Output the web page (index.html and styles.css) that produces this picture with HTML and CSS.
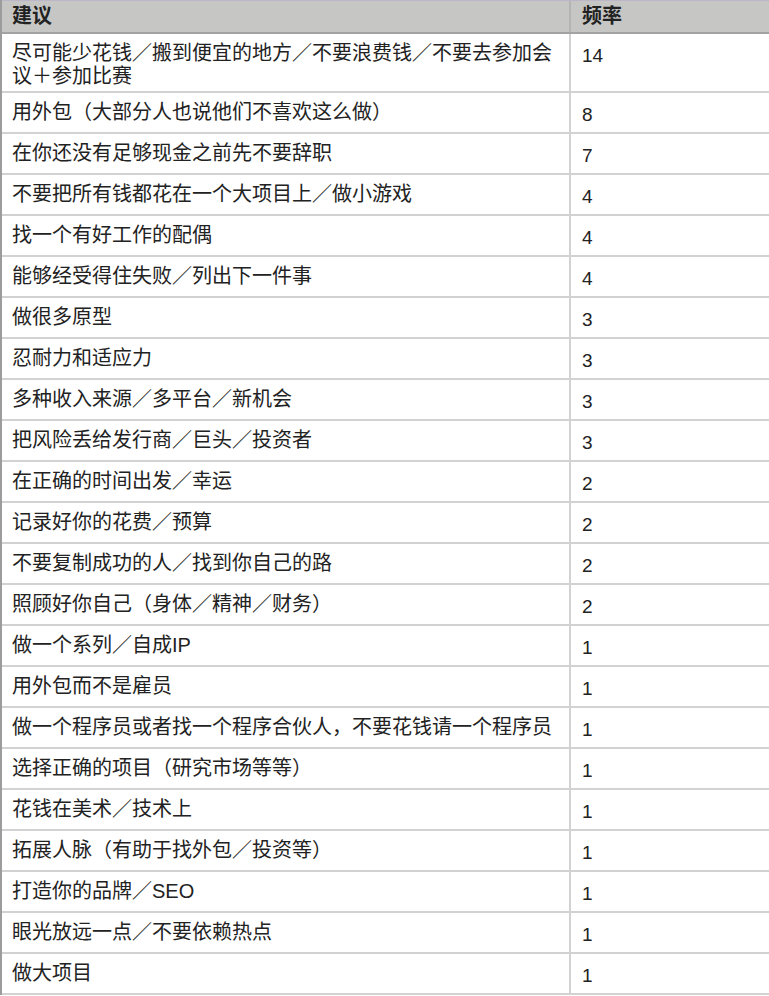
FILE: index.html
```html
<!DOCTYPE html>
<html lang="zh">
<head>
<meta charset="utf-8">
<title>建议 频率</title>
<link rel="stylesheet" href="styles.css">
</head>
<body>
<div class="table">
  <div class="row head"><div class="c1">建议</div><div class="c2">频率</div></div>
  <div class="row tall"><div class="c1">尽可能少花钱／搬到便宜的地方／不要浪费钱／不要去参加会议＋参加比赛</div><div class="c2 num">14</div></div>
  <div class="row"><div class="c1">用外包（大部分人也说他们不喜欢这么做）</div><div class="c2 num">8</div></div>
  <div class="row"><div class="c1">在你还没有足够现金之前先不要辞职</div><div class="c2 num">7</div></div>
  <div class="row"><div class="c1">不要把所有钱都花在一个大项目上／做小游戏</div><div class="c2 num">4</div></div>
  <div class="row"><div class="c1">找一个有好工作的配偶</div><div class="c2 num">4</div></div>
  <div class="row"><div class="c1">能够经受得住失败／列出下一件事</div><div class="c2 num">4</div></div>
  <div class="row"><div class="c1">做很多原型</div><div class="c2 num">3</div></div>
  <div class="row"><div class="c1">忍耐力和适应力</div><div class="c2 num">3</div></div>
  <div class="row"><div class="c1">多种收入来源／多平台／新机会</div><div class="c2 num">3</div></div>
  <div class="row"><div class="c1">把风险丢给发行商／巨头／投资者</div><div class="c2 num">3</div></div>
  <div class="row"><div class="c1">在正确的时间出发／幸运</div><div class="c2 num">2</div></div>
  <div class="row"><div class="c1">记录好你的花费／预算</div><div class="c2 num">2</div></div>
  <div class="row"><div class="c1">不要复制成功的人／找到你自己的路</div><div class="c2 num">2</div></div>
  <div class="row"><div class="c1">照顾好你自己（身体／精神／财务）</div><div class="c2 num">2</div></div>
  <div class="row"><div class="c1">做一个系列／自成IP</div><div class="c2 num">1</div></div>
  <div class="row"><div class="c1">用外包而不是雇员</div><div class="c2 num">1</div></div>
  <div class="row"><div class="c1">做一个程序员或者找一个程序合伙人，不要花钱请一个程序员</div><div class="c2 num">1</div></div>
  <div class="row"><div class="c1">选择正确的项目（研究市场等等）</div><div class="c2 num">1</div></div>
  <div class="row"><div class="c1">花钱在美术／技术上</div><div class="c2 num">1</div></div>
  <div class="row"><div class="c1">拓展人脉（有助于找外包／投资等）</div><div class="c2 num">1</div></div>
  <div class="row"><div class="c1">打造你的品牌／SEO</div><div class="c2 num">1</div></div>
  <div class="row"><div class="c1">眼光放远一点／不要依赖热点</div><div class="c2 num">1</div></div>
  <div class="row"><div class="c1">做大项目</div><div class="c2 num">1</div></div>
</div>
</body>
</html>
```

FILE: styles.css
```css
html, body {
  margin: 0;
  padding: 0;
  background: #ffffff;
}

.table {
  width: 767px;
  border-left: 2px solid #9c9c9c;
  border-right: 2px solid #c9c9c9;
  font-family: "Liberation Sans", "Noto Sans CJK SC", sans-serif;
  font-size: 20px;
  line-height: 23px;
  color: #222222;
}

.row {
  display: grid;
  grid-template-columns: 569px 1fr;
  height: 41px;
  box-sizing: border-box;
  border-bottom: 2px solid #d2d2d2;
}

.row.tall {
  height: 59px;
}

.row.head {
  height: 34px;
  background: #c6c7c5;
  border-top: 1px solid #bcb6c8;
  border-bottom: 2px solid #a3a3a3;
  font-weight: bold;
}

.c1 {
  padding: 8px 8px 0 10px;
  border-right: 2px solid #d2d2d2;
}

.head .c1 {
  padding-top: 4px;
  border-right-color: #b4b4b4;
}

.c2 {
  padding: 8px 8px 0 11px;
}

.head .c2 {
  padding-top: 4px;
}

.num {
  padding-top: 10px;
  font-size: 19px;
}
```
